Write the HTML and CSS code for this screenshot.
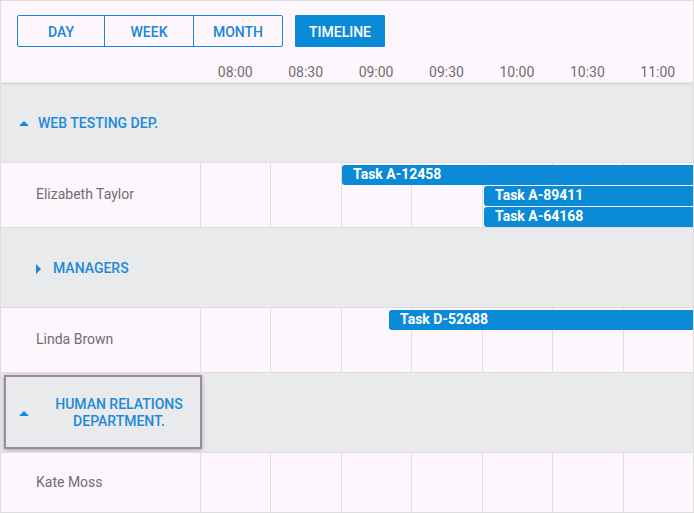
FILE: index.html
```html
<!DOCTYPE html>
<html lang="en">
<head>
<meta charset="utf-8">
<title>Scheduler Timeline</title>
<link rel="stylesheet" href="styles.css">
</head>
<body>
<div class="scheduler">
  <div class="header">
    <div class="toolbar">
      <div class="views">
        <button class="view v-day">Day</button>
        <button class="view v-week">Week</button>
        <button class="view v-month">Month</button>
      </div>
      <button class="view v-timeline active">Timeline</button>
    </div>
    <div class="timescale">
      <div class="corner"></div>
      <div class="tick">08:00</div>
      <div class="tick">08:30</div>
      <div class="tick">09:00</div>
      <div class="tick">09:30</div>
      <div class="tick">10:00</div>
      <div class="tick">10:30</div>
      <div class="tick">11:00</div>
    </div>
  </div>

  <div class="body">
    <div class="group">
      <div class="group-head lvl1">
        <span class="caret up"></span>
        <span class="group-name">Web Testing Dep.</span>
      </div>
    </div>
    <div class="resource">
      <div class="res-name">Elizabeth Taylor</div>
      <div class="cell"></div><div class="cell"></div><div class="cell"></div><div class="cell"></div><div class="cell"></div><div class="cell"></div><div class="cell"></div>
      <div class="events">
        <div class="event" style="margin-left:341px">Task A-12458</div>
        <div class="event" style="margin-left:483px">Task A-89411</div>
        <div class="event" style="margin-left:483px">Task A-64168</div>
      </div>
    </div>

    <div class="group">
      <div class="group-head lvl2">
        <span class="caret right"></span>
        <span class="group-name">Managers</span>
      </div>
    </div>
    <div class="resource">
      <div class="res-name">Linda Brown</div>
      <div class="cell"></div><div class="cell"></div><div class="cell"></div><div class="cell"></div><div class="cell"></div><div class="cell"></div><div class="cell"></div>
      <div class="events">
        <div class="event" style="margin-left:388px">Task D-52688</div>
      </div>
    </div>

    <div class="group">
      <div class="group-head lvl1 focused">
        <span class="caret up"></span>
        <span class="group-name">Human Relations Department.</span>
      </div>
    </div>
    <div class="resource last">
      <div class="res-name">Kate Moss</div>
      <div class="cell"></div><div class="cell"></div><div class="cell"></div><div class="cell"></div><div class="cell"></div><div class="cell"></div><div class="cell"></div>
    </div>
  </div>
</div>
</body>
</html>
```

FILE: styles.css
```css
* { box-sizing: border-box; }

html, body {
  margin: 0;
  padding: 0;
  background: #fdf7fd;
}

body {
  font-family: Roboto, "Liberation Sans", Arial, sans-serif;
}

.scheduler {
  width: 694px;
  height: 513px;
  border: 1px solid #dedede;
  border-bottom: none;
  overflow: hidden;
  background: #fdf7fd;
  display: flex;
  flex-direction: column;
}

/* Header */
.header {
  position: relative;
  z-index: 2;
  background: #fdf7fd;
  box-shadow: 0 1px 3px rgba(0, 0, 0, 0.12);
  border-bottom: 1px solid #e6e3e6;
}

.toolbar {
  display: flex;
  align-items: center;
  padding: 14px 0 0 16px;
  height: 46px;
}

.views {
  display: flex;
}

.view {
  height: 32px;
  border: 1px solid #1a86d6;
  background: transparent;
  color: #1a86d6;
  font-family: Roboto, "Liberation Sans", Arial, sans-serif;
  font-size: 14px;
  font-weight: 500;
  text-transform: uppercase;
  padding: 1px 0 0;
  margin: 0;
  cursor: pointer;
}

.v-day { width: 88px; border-radius: 2px 0 0 2px; }
.v-week { width: 90px; margin-left: -1px; border-radius: 0; }
.v-month { width: 90px; margin-left: -1px; border-radius: 0 2px 2px 0; }

.v-timeline {
  width: 90px;
  margin-left: 12px;
  background: #0a8ad7;
  border-color: #0a8ad7;
  color: #fff;
  border-radius: 1px;
}

.timescale {
  display: grid;
  grid-template-columns: 199px repeat(7, 1fr);
  height: 35px;
  align-items: center;
  padding-top: 14px;
}

.tick {
  text-align: center;
  font-size: 14px;
  color: #6e6e6e;
  line-height: 20px;
}

/* Body */
.body {
  display: flex;
  flex-direction: column;
}

.group {
  height: 79px;
  background: #e9eaeb;
  display: flex;
}

.group-head {
  width: 199px;
  display: flex;
  align-items: center;
  padding-top: 2px;
}

.group-head.lvl1 { padding-left: 18px; }
.group-head.lvl2 { padding-left: 35px; }

.group-head.focused {
  width: 198px;
  margin: 2px 0 3px 3px;
  border: 2px solid #9d889d;
  box-shadow: 0 1px 4px rgba(0, 0, 0, 0.3);
  padding-left: 13px;
}

.caret {
  flex: none;
  width: 0;
  height: 0;
}

.caret.up {
  border-left: 5px solid transparent;
  border-right: 5px solid transparent;
  border-bottom: 5px solid #1a86d6;
  margin-right: 9px;
}

.caret.right {
  border-top: 5px solid transparent;
  border-bottom: 5px solid transparent;
  border-left: 5px solid #1a86d6;
  margin-right: 12px;
}

.group-name {
  color: #1d89dc;
  font-size: 14px;
  font-weight: 500;
  text-transform: uppercase;
  line-height: 17px;
  text-align: center;
}

.resource {
  position: relative;
  height: 66px;
  display: grid;
  grid-template-columns: 199px repeat(7, 1fr);
  border-top: 1px solid #dedcde;
  border-bottom: 1px solid #dedcde;
  background: #fdf7fd;
}

.resource.last {
  height: 61px;
}

.res-name {
  display: flex;
  align-items: center;
  padding-left: 35px;
  padding-bottom: 2px;
  font-size: 14px;
  color: #6e6e6e;
}

.cell {
  border-left: 1px solid #e2dfe2;
}

.events {
  position: absolute;
  top: 0;
  left: 0;
  right: 0;
  bottom: 0;
  display: flex;
  flex-direction: column;
  gap: 1px;
  padding-top: 2px;
}

.event {
  height: 20px;
  background: #0a8ad7;
  color: #fff;
  font-size: 14px;
  font-weight: 700;
  line-height: 19px;
  padding-left: 11px;
  border-radius: 3px 0 0 3px;
  white-space: nowrap;
}
```
